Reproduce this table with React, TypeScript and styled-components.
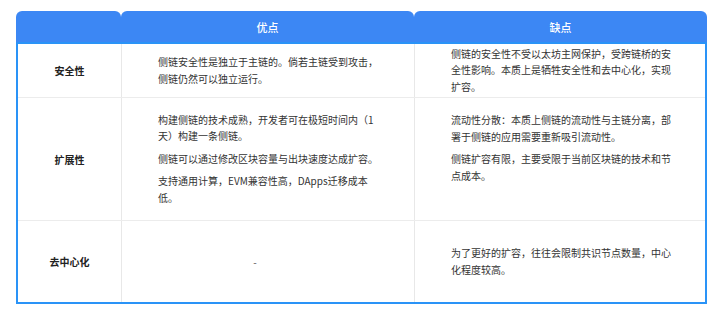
import React from "react";
import styled, { createGlobalStyle } from "styled-components";

const GlobalStyle = createGlobalStyle`
  html, body {
    margin: 0;
    padding: 0;
    background: #ffffff;
  }
  body {
    font-family: "Noto Sans CJK SC", "Noto Sans", sans-serif;
    color: #333333;
  }
`;

const Page = styled.div`
  padding: 11px 15px 0 16px;
`;

const Table = styled.div`
  width: 691px;
`;

const Header = styled.div`
  display: grid;
  grid-template-columns: 105px 293px 1fr;
  height: 31px;
`;

const Tab = styled.div`
  display: flex;
  align-items: center;
  justify-content: center;
  background: #3c87f4;
  border-radius: 6px 6px 0 0;
  color: #ffffff;
  font-size: 11px;
  font-weight: 500;
`;

const Body = styled.div`
  border: 2px solid #2a93f7;
`;

const Row = styled.div<{ $height: number }>`
  display: grid;
  grid-template-columns: 103px 293px 1fr;
  height: ${(p) => p.$height}px;
  border-bottom: 1px solid #ececec;

  &:last-child {
    border-bottom: none;
  }
`;

const Label = styled.div`
  display: flex;
  align-items: center;
  justify-content: center;
  font-size: 10px;
  font-weight: 700;
  color: #222222;
`;

const Cell = styled.div<{ $top?: boolean }>`
  display: flex;
  flex-direction: column;
  justify-content: ${(p) => (p.$top ? "flex-start" : "center")};
  padding: ${(p) => (p.$top ? "14px" : "0")} 32px 0 36px;
  border-left: 1px solid #e8e8e8;
  font-size: 10px;
  color: #333333;
`;

const Para = styled.p`
  margin: 0;
  line-height: 16.5px;

  & + & {
    margin-top: 6px;
  }
`;

const Dash = styled.div`
  text-align: center;
  padding-right: 30px;
  line-height: 16px;
  color: #555555;
`;

type RowData = {
  label: string;
  height: number;
  pros: string[];
  cons: string[];
  consTop?: boolean;
};

const rows: RowData[] = [
  {
    label: "安全性",
    height: 53,
    pros: ["侧链安全性是独立于主链的。倘若主链受到攻击，侧链仍然可以独立运行。"],
    cons: ["侧链的安全性不受以太坊主网保护，受跨链桥的安全性影响。本质上是牺牲安全性和去中心化，实现扩容。"],
  },
  {
    label: "扩展性",
    height: 122,
    pros: [
      "构建侧链的技术成熟，开发者可在极短时间内（1天）构建一条侧链。",
      "侧链可以通过修改区块容量与出块速度达成扩容。",
      "支持通用计算，EVM兼容性高，DApps迁移成本低。",
    ],
    cons: [
      "流动性分散：本质上侧链的流动性与主链分离，部署于侧链的应用需要重新吸引流动性。",
      "侧链扩容有限，主要受限于当前区块链的技术和节点成本。",
    ],
    consTop: true,
  },
  {
    label: "去中心化",
    height: 81,
    pros: [],
    cons: ["为了更好的扩容，往往会限制共识节点数量，中心化程度较高。"],
  },
];

export default function App() {
  return (
    <>
      <GlobalStyle />
      <Page>
        <Table>
          <Header>
            <Tab />
            <Tab>优点</Tab>
            <Tab>缺点</Tab>
          </Header>
          <Body>
            {rows.map((row) => (
              <Row key={row.label} $height={row.height}>
                <Label>{row.label}</Label>
                <Cell>
                  {row.pros.length ? (
                    row.pros.map((t) => <Para key={t}>{t}</Para>)
                  ) : (
                    <Dash>-</Dash>
                  )}
                </Cell>
                <Cell $top={row.consTop}>
                  {row.cons.map((t) => (
                    <Para key={t}>{t}</Para>
                  ))}
                </Cell>
              </Row>
            ))}
          </Body>
        </Table>
      </Page>
    </>
  );
}
